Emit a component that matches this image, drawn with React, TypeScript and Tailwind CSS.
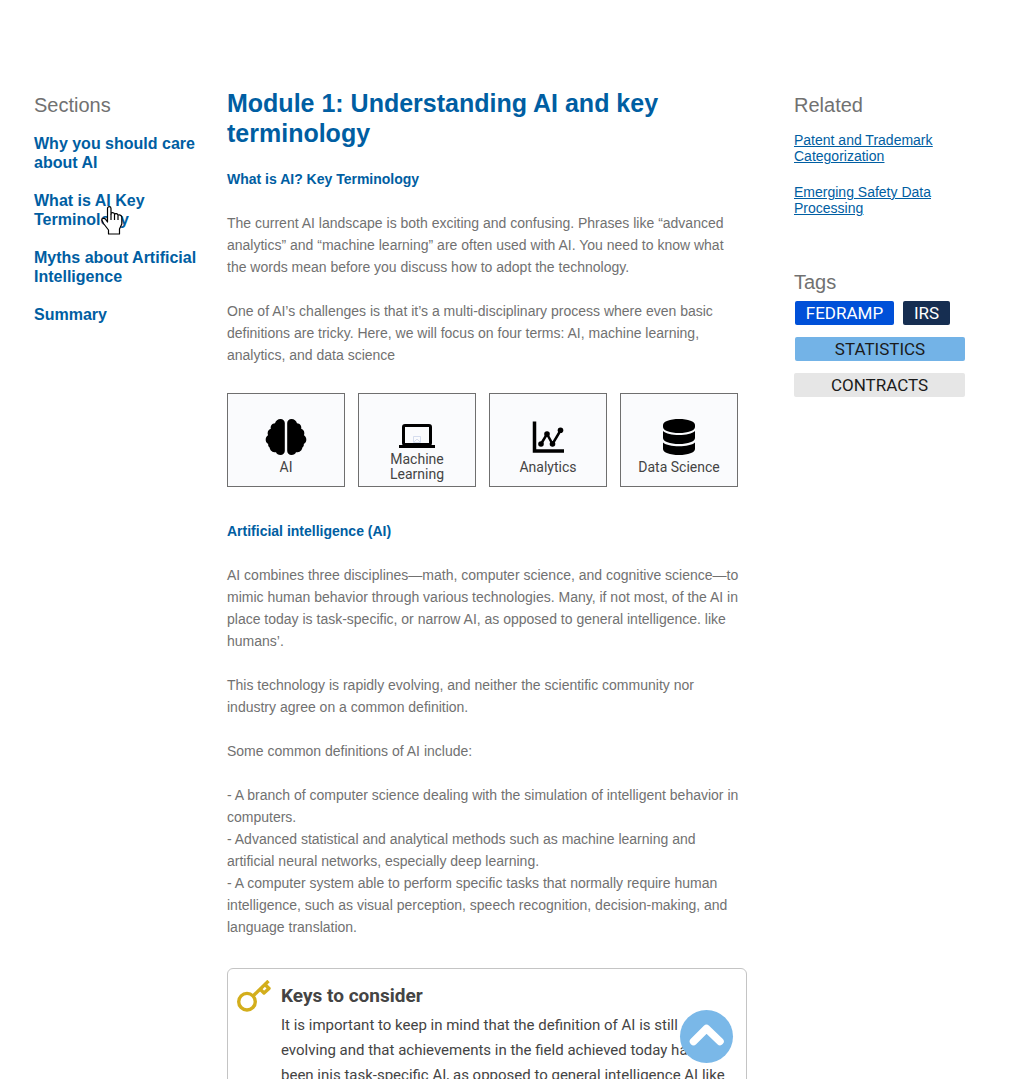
import type { ReactNode } from "react";

const sections = [
  "Why you should care about AI",
  "What is AI Key Terminology",
  "Myths about Artificial Intelligence",
  "Summary",
];

function BrainIcon() {
  return (
    <svg viewBox="0 0 42 36" className="h-9 w-[42px]" fill="black" aria-hidden="true">
      <path d="M15.500 0C18 0 19.800 1.700 19.800 4V32C19.800 34.300 18 36 15.500 36C13.300 36 11.700 35 11 33.300C8 33.600 5 31.900 4.600 28.500C3.400 27.700 3 26.400 3.200 25C1.200 24 .6 22.300 .7 20.300C.8 18.500 1.700 17.200 3 16.300C2 13.500 3 10.800 5.800 9.800C5.200 6.800 7 4.600 10 4.300C10.700 1.700 12.800 0 15.500 0Z" />
      <path d="M26.500 0C24 0 22.200 1.700 22.200 4V32C22.200 34.300 24 36 26.500 36C28.700 36 30.300 35 31 33.300C34 33.600 37 31.900 37.400 28.500C38.600 27.700 39 26.400 38.800 25C40.800 24 41.400 22.300 41.300 20.300C41.200 18.500 40.300 17.200 39 16.300C40 13.500 39 10.800 36.200 9.800C36.800 6.800 35 4.600 32 4.300C31.300 1.700 29.200 0 26.500 0Z" />
    </svg>
  );
}

function LaptopIcon() {
  return (
    <svg viewBox="0 0 36 24" className="h-6 w-9" aria-hidden="true">
      <rect x="4.500" y="1.500" width="27" height="19" rx="1.500" fill="none" stroke="black" strokeWidth="3" />
      <path d="M0 21H36V24H0Z" fill="black" />
      <g fill="none" stroke="#cbd5ea" strokeWidth=".8">
        <path d="M14.500 12.500H21.500V18.500H14.500ZM15 18L18 15L21 18" />
      </g>
    </svg>
  );
}

function ChartIcon() {
  return (
    <svg viewBox="0 0 32 36" className="h-9 w-8" fill="none" stroke="black" aria-hidden="true">
      <path d="M2.500 2.500V32H32" strokeWidth="3.500" />
      <path d="M9 25L15 15L20.500 25L28.500 11.500" strokeWidth="2.500" />
      <g fill="black" stroke="none">
        <circle cx="9" cy="25" r="2.800" />
        <circle cx="15" cy="15" r="2.800" />
        <circle cx="20.500" cy="25" r="2.800" />
        <circle cx="28.500" cy="11.200" r="2.800" />
      </g>
    </svg>
  );
}

function DatabaseIcon() {
  return (
    <svg viewBox="0 0 32 36" className="h-9 w-8" fill="black" aria-hidden="true">
      <path d="M0 6C0 2.500 7 0 16 0S32 2.500 32 6V8C32 11.500 25 14 16 14S0 11.500 0 8Z" />
      <path d="M0 12C3 14.800 9 16 16 16S29 14.800 32 12V19C32 22.500 25 25 16 25S0 22.500 0 19Z" />
      <path d="M0 23.500C3 26.200 9 27.200 16 27.200S29 26.200 32 23.500V30C32 33.500 25 36 16 36S0 33.500 0 30Z" />
    </svg>
  );
}

function KeyIcon() {
  return (
    <svg viewBox="0 0 34 32" className="h-8 w-[34px]" fill="none" stroke="#d3ae1c" strokeWidth="3.400" aria-hidden="true">
      <circle cx="10" cy="21.700" r="8.300" />
      <path d="M16 16L31.500 1" />
      <path d="M23.500 9.500L27 13L32 8.500L28.500 5" strokeLinejoin="round" />
    </svg>
  );
}

function HandCursor() {
  return (
    <svg viewBox="0 0 22 29" className="pointer-events-none absolute left-[67px] top-[15px] h-[29px] w-[22px]" fill="white" stroke="black" strokeWidth="1.200" strokeLinejoin="round" aria-hidden="true">
      <path d="M6.500 16V2.500C6.500 0 10 0 10 2.500V8C10 6.200 13.500 6.200 13.500 8.500C14 7 17 7.300 17 9.500C17.800 8.500 20.800 8.800 20.800 11.500V18L18.500 23V28H7.500V24L2.500 17.500L.8 14C.8 12 3.500 11.800 4.500 13.200Z" />
      <path d="M10 8V14M13.500 9V14M17 10V14" fill="none" />
    </svg>
  );
}

function Topic({ label, children }: { label: string; children: ReactNode }) {
  const twoLines = label === "Machine Learning";
  return (
    <button
      type="button"
      className="flex h-[94px] flex-col items-center justify-end border border-[#6f6f6f] bg-[#fafbfd] px-4 font-['Roboto',sans-serif] text-sm leading-[15px] text-[#444]"
    >
      <span className={twoLines ? "pb-1" : "pb-[5px]"}>{children}</span>
      <span className={twoLines ? "pb-1" : "whitespace-nowrap pb-[11px]"}>{label}</span>
    </button>
  );
}

export default function App() {
  return (
    <div className="h-screen overflow-hidden bg-white font-['Liberation_Sans',Arial,sans-serif] text-[#717171]">
      <div className="grid grid-cols-[193px_minmax(0,1fr)_171px] pl-[34px] pr-[59px] pt-[88px]">
        <nav aria-labelledby="sections" className="pr-6">
          <h2 id="sections" className="pt-[5px] text-xl leading-6">Sections</h2>
          <ul className="mt-[17px] flex flex-col gap-[19px]">
            {sections.map((s, i) => (
              <li key={s} className="relative">
                <a href="#module" className="block text-base font-bold leading-[19px] text-[#005ea2]">{s}</a>
                {i === 1 && <HandCursor />}
              </li>
            ))}
          </ul>
        </nav>

        <main id="module" className="relative mr-[47px] h-[calc(100vh-88px)] text-sm leading-[22px]">
          <h1 className="text-[25px] font-bold leading-[30px] text-[#005ea2]">
            Module 1: Understanding AI and key<br />
            terminology
          </h1>
          <h2 className="mt-5 font-bold text-[#005ea2]">What is AI? Key Terminology</h2>
          <p className="mt-[22px]">
            The current AI landscape is both exciting and confusing. Phrases like “advanced<br />
            analytics” and “machine learning” are often used with AI. You need to know what<br />
            the words mean before you discuss how to adopt the technology.
          </p>
          <p className="mt-[22px]">
            One of AI’s challenges is that it’s a multi-disciplinary process where even basic<br />
            definitions are tricky. Here, we will focus on four terms: AI, machine learning,<br />
            analytics, and data science
          </p>

          <div className="mt-[27px] grid grid-cols-4 gap-[13px] pr-[9px]">
            <Topic label="AI"><BrainIcon /></Topic>
            <Topic label="Machine Learning"><LaptopIcon /></Topic>
            <Topic label="Analytics"><ChartIcon /></Topic>
            <Topic label="Data Science"><DatabaseIcon /></Topic>
          </div>

          <h2 className="mt-[33px] font-bold text-[#005ea2]">Artificial intelligence (AI)</h2>
          <p className="mt-[22px]">
            AI combines three disciplines—math, computer science, and cognitive science—to<br />
            mimic human behavior through various technologies. Many, if not most, of the AI in<br />
            place today is task-specific, or narrow AI, as opposed to general intelligence. like<br />
            humans’.
          </p>
          <p className="mt-[22px]">
            This technology is rapidly evolving, and neither the scientific community nor<br />
            industry agree on a common definition.
          </p>
          <p className="mt-[22px]">Some common definitions of AI include:</p>
          <p className="mt-[22px]">
            - A branch of computer science dealing with the simulation of intelligent behavior in<br />
            computers.<br />
            - Advanced statistical and analytical methods such as machine learning and<br />
            artificial neural networks, especially deep learning.<br />
            - A computer system able to perform specific tasks that normally require human<br />
            intelligence, such as visual perception, speech recognition, decision-making, and<br />
            language translation.
          </p>

          <section className="mt-[30px] flex gap-[10px] rounded-md border border-[#c4c4c4] pb-6 pl-[9px] pt-[11px] font-['Roboto',sans-serif] text-[#444]">
            <KeyIcon />
            <div className="whitespace-nowrap">
              <h2 className="pt-1 text-[19px] font-bold leading-6">Keys to consider</h2>
              <p className="mt-[5px] text-[15px] leading-[25px]">
                It is important to keep in mind that the definition of AI is still<br />
                evolving and that achievements in the field achieved today have<br />
                been inis task-specific AI, as opposed to general intelligence AI like
              </p>
            </div>
          </section>

          <button type="button" aria-label="Back to top" className="absolute bottom-4 right-[14px] flex size-[53px] items-center justify-center rounded-full bg-[#7ab8e8]">
            <svg viewBox="0 0 53 53" className="size-full" fill="none" stroke="white" strokeWidth="7.500" aria-hidden="true">
              <path d="M13.500 31.500L26.500 18.500L40 31.500" strokeLinecap="round" strokeLinejoin="round" />
            </svg>
          </button>
        </main>

        <aside>
          <h2 className="pt-[5px] text-xl leading-6">Related</h2>
          <div className="mt-[15px] flex flex-col gap-5 text-sm leading-4 text-[#005ea2] underline">
            <a href="#patent">Patent and Trademark Categorization</a>
            <a href="#safety">Emerging Safety Data Processing</a>
          </div>
          <h2 className="mt-[54px] text-xl leading-6">Tags</h2>
          <div className="mt-[7px] flex flex-wrap gap-x-[9px] gap-y-3 font-['Roboto',sans-serif] text-[17px] leading-6 text-[#1b1b1b]">
            <a href="#fedramp" className="ml-px w-[99px] rounded-xs bg-[#0050d8] text-center text-white">FEDRAMP</a>
            <a href="#irs" className="w-[47px] rounded-xs bg-[#162e51] text-center text-white">IRS</a>
            <a href="#statistics" className="ml-px w-full rounded-xs bg-[#73b3e7] text-center">STATISTICS</a>
            <a href="#contracts" className="w-full rounded-xs bg-[#e6e6e6] text-center">CONTRACTS</a>
          </div>
        </aside>
      </div>
    </div>
  );
}
